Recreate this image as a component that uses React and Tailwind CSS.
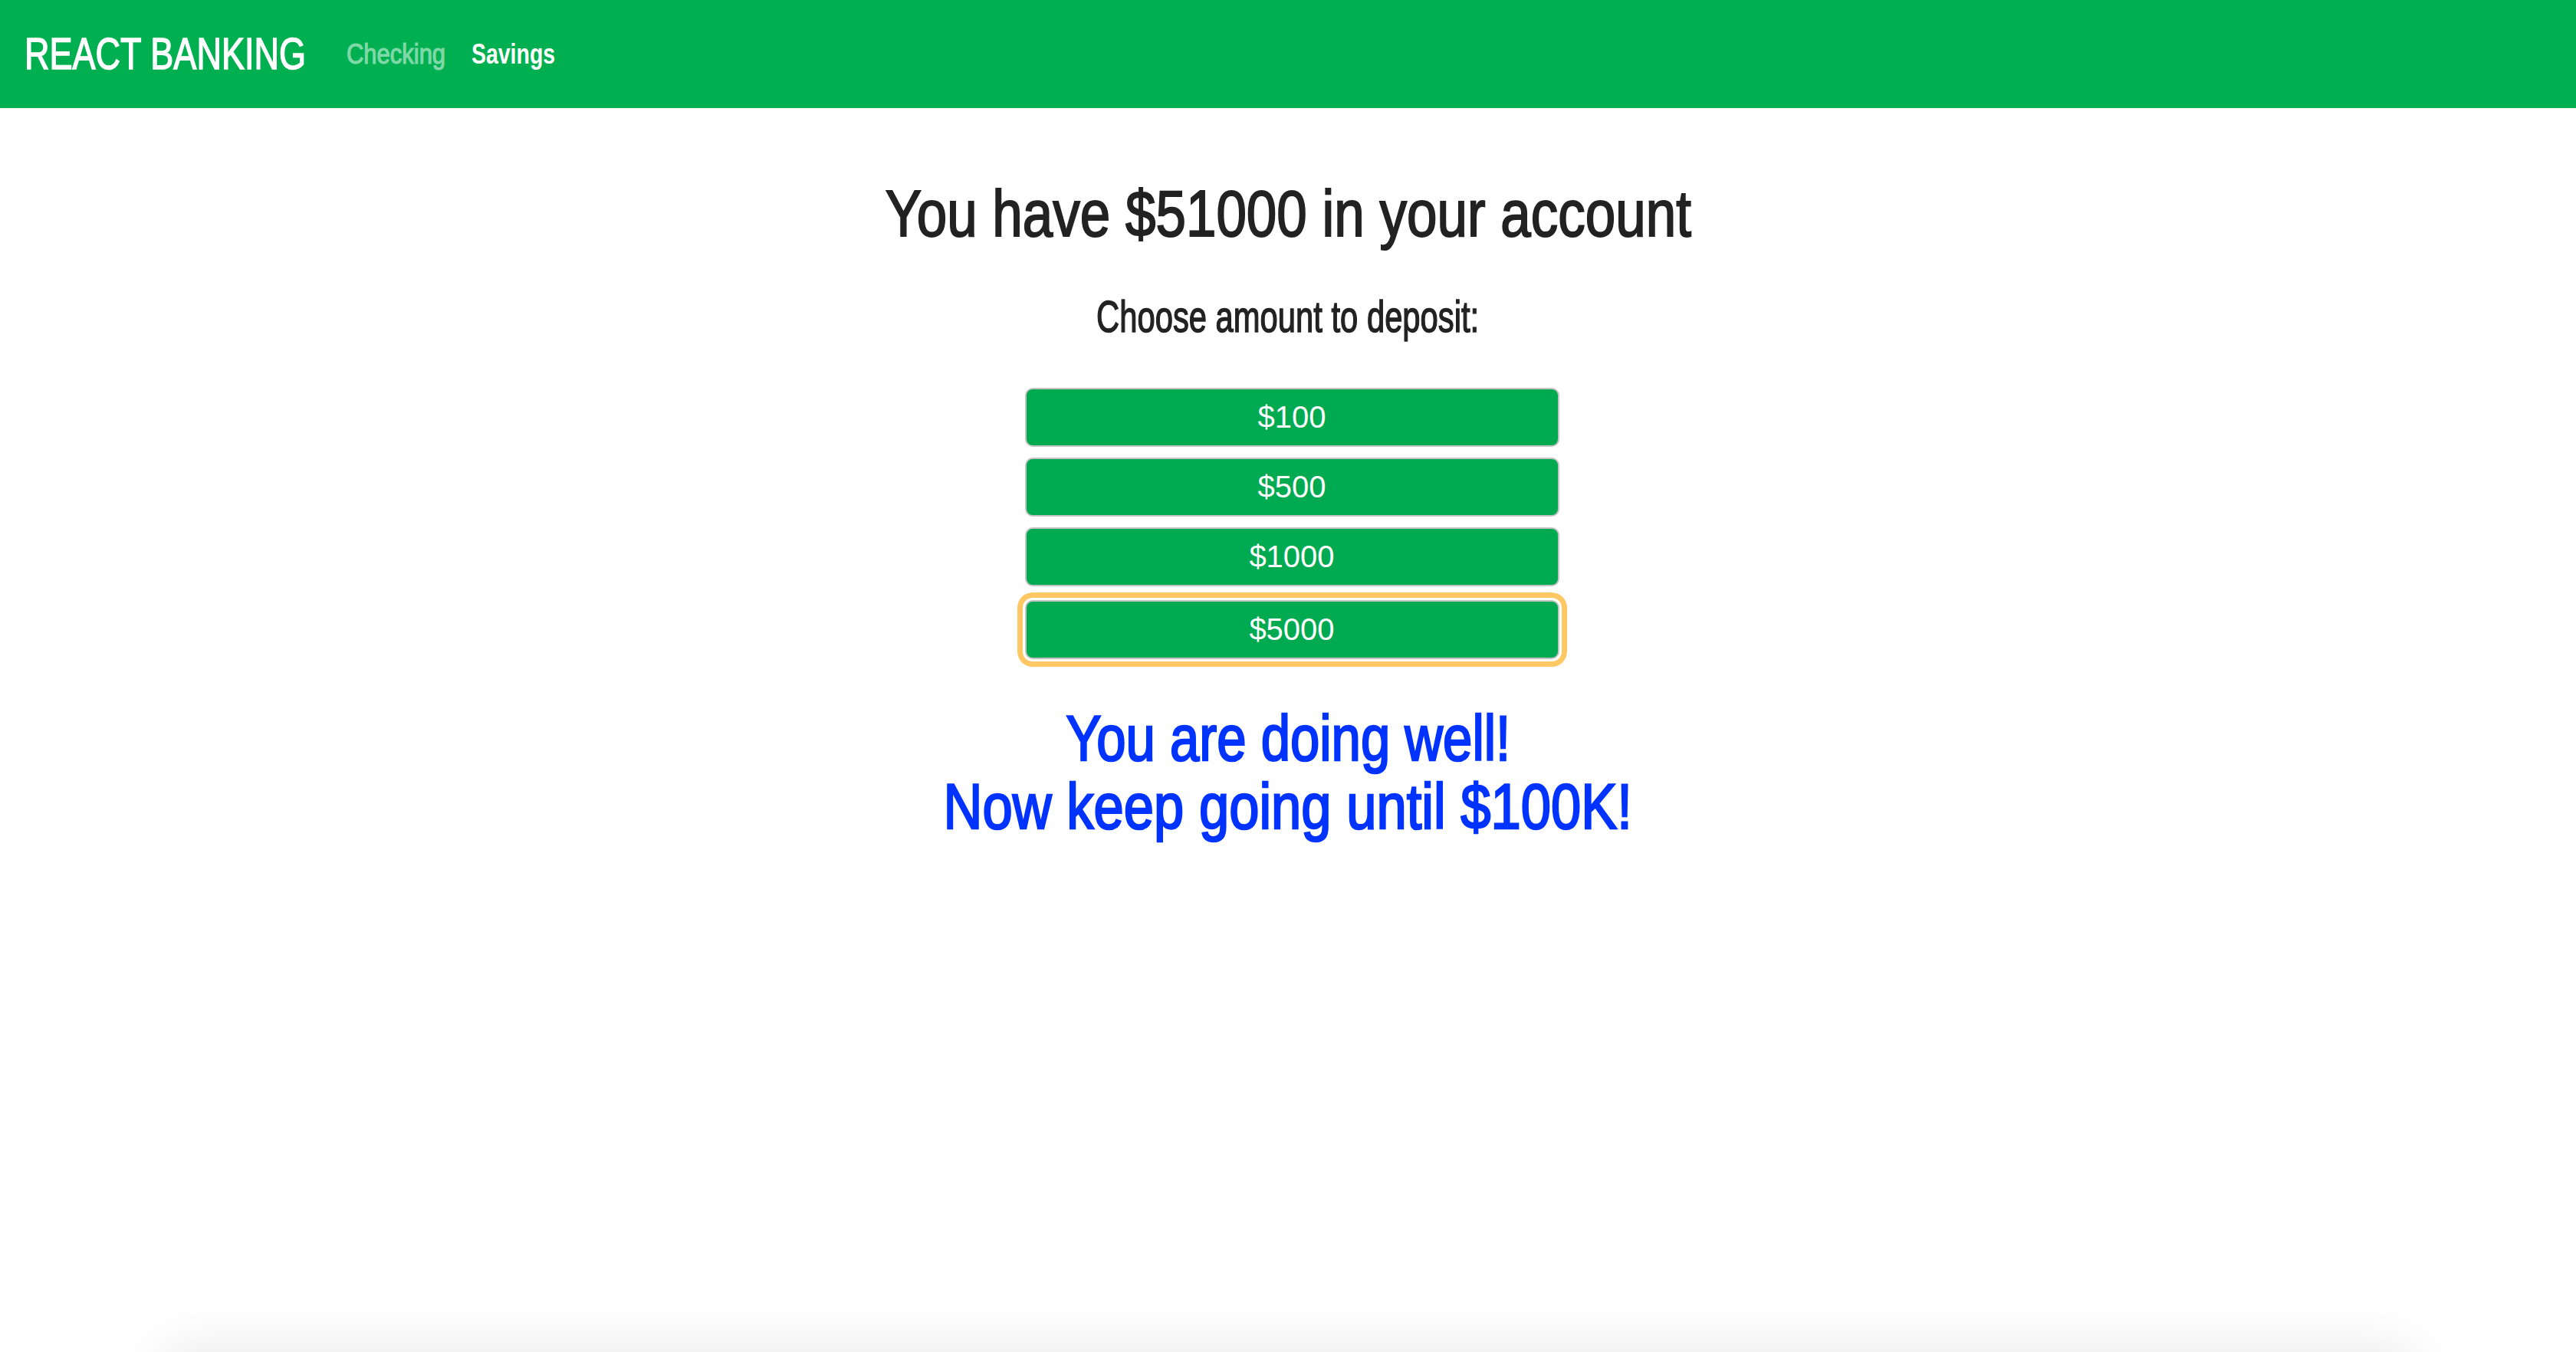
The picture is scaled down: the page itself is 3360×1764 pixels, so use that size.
import React from "react";

const sans = { fontFamily: '"Liberation Sans", Arial, sans-serif' };

export default function App() {
  const amounts = ["$100", "$500", "$1000", "$5000"];
  return (
    <div className="h-[1764px] w-full overflow-hidden flex flex-col bg-white" style={sans}>
      <nav className="h-[141px] shrink-0 bg-[#00b050] flex items-center pl-[32px]">
        <a className="block w-[371px] text-white text-[57px] leading-none whitespace-nowrap [-webkit-text-stroke-width:1.5px]">
          <span className="inline-block origin-left scale-x-[0.79]">REACT BANKING</span>
        </a>
        <a className="block ml-[49px] w-[131px] text-[#80d8a8] text-[36px] leading-none whitespace-nowrap [-webkit-text-stroke-width:1.2px]">
          <span className="inline-block origin-left scale-x-[0.86]">Checking</span>
        </a>
        <a className="block ml-[32px] w-[107px] text-white font-bold text-[36px] leading-none whitespace-nowrap">
          <span className="inline-block origin-left scale-x-[0.79]">Savings</span>
        </a>
      </nav>
      <main className="h-[1623px] shrink-0 flex flex-col items-center text-center">
        <h1 className="mt-[87px] text-[85px] leading-[1.2] text-[#222222] font-normal whitespace-nowrap [-webkit-text-stroke-width:2px]">
          <span className="inline-block scale-x-[0.835]">You have $51000 in your account</span>
        </h1>
        <h3 className="mt-[50px] text-[58px] leading-[1.15] text-[#222222] whitespace-nowrap [-webkit-text-stroke-width:1.5px]">
          <span className="inline-block scale-x-[0.72]">Choose amount to deposit:</span>
        </h3>
        <div className="mt-[59px] ml-[10px] flex flex-col w-[697px]">
          {amounts.map((a, i) => (
            <button
              key={a}
              className={
                "h-[77px] w-full rounded-[10px] border-2 border-[#c4c4c4] bg-[#00aa50] text-white text-[40px] flex items-center justify-center " +
                (i === 3 ? "mt-[18px] shadow-[0_0_0_3px_#ffffff,0_0_0_10px_#ffc864]" : i === 0 ? "" : "mt-[14px]")
              }
              style={sans}
            >
              {a}
            </button>
          ))}
        </div>
        <div className="mt-[59px] text-[84px] leading-[89px] text-[#0033ff] whitespace-nowrap [-webkit-text-stroke-width:2.5px]">
          <div>
            <span className="inline-block scale-x-[0.82]">You are doing well!</span>
          </div>
          <div>
            <span className="inline-block scale-x-[0.84]">Now keep going until $100K!</span>
          </div>
        </div>
      </main>
      <div className="h-[300px] shrink-0 mx-[215px] bg-white shadow-[0_0_70px_rgba(0,0,0,0.1)]"></div>
    </div>
  );
}
